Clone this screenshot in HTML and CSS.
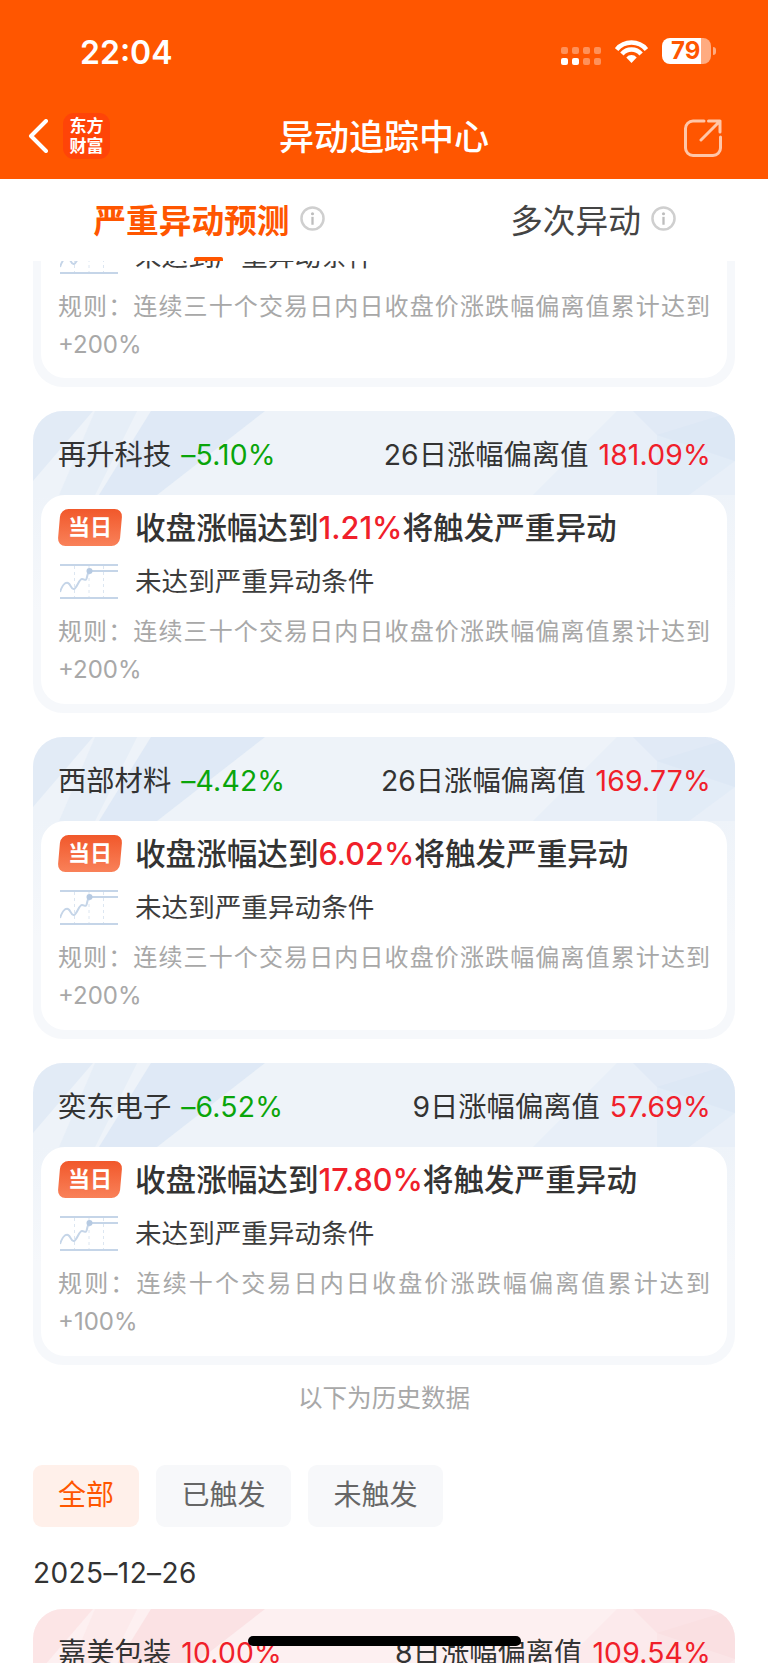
FILE: index.html
```html
<!doctype html>
<html lang="zh">
<head>
  <meta charset="utf-8">
  <title>异动追踪中心</title>
  <link rel="stylesheet" href="styles.css">
</head>
<body>
<svg class="defs" width="0" height="0">
  <symbol id="facets" viewBox="0 0 702 84" preserveAspectRatio="none">
    <polygon points="0,0 60,0 0,70" fill-opacity=".4"/>
    <polygon points="62,0 104,0 62,84 26,84" fill-opacity=".22"/>
    <polygon points="118,0 232,0 124,84 66,84" fill-opacity=".5"/>
    <polygon points="584,0 702,0 702,84 500,84" fill-opacity=".18"/>
    <polygon points="624,24 702,0 702,50 656,84 624,84" fill-opacity=".2"/>
    <polygon points="600,0 702,0 702,50 624,24" fill-opacity=".3"/>
  </symbol>
  <symbol id="info" viewBox="0 0 24 24">
    <circle cx="12" cy="12" r="10.6" fill="none" stroke="#cfcfcf" stroke-width="2.4"/>
    <circle cx="12" cy="7.4" r="1.5" fill="#bdbdbd"/>
    <rect x="10.9" y="10.4" width="2.2" height="7.6" fill="#bdbdbd"/>
  </symbol>
  <symbol id="trend" viewBox="0 0 58 35">
    <g fill="none" stroke="#c5d5e8">
      <path d="M0 1H58M0 34H58" stroke-width="2"/>
      <path d="M14.5 2V33M29 2V33M43.5 2V33" stroke-width="1" stroke-dasharray="3 3" stroke-opacity=".6"/>
      <path d="M0 28C2 22 5 18 8 19C11 20 11 26 14 25C17 24 19 15 22 15C25 15 26 18 27 13C28 9 28 7 30 7H58" stroke-width="2"/>
    </g>
    <circle cx="29.5" cy="7" r="3" fill="#b6cae2"/>
  </symbol>
</svg>

<div class="page">
  <header class="top">
    <div class="status">
      <span class="time">22:04</span>
      <div class="status-icons">
        <div class="cells">
          <i></i><i></i><i></i><i></i>
          <i class="on"></i><i class="on"></i><i></i><i></i>
        </div>
        <svg class="wifi" viewBox="0 0 33 23">
          <g fill="none" stroke="#fff" stroke-width="4.5">
            <path d="M1.6 9.5A19.5 19.5 0 0 1 31.4 9.5"/>
            <path d="M6.9 14A12.5 12.5 0 0 1 26.1 14"/>
          </g>
          <path d="M16.5 23L11.3 17.4A7 7 0 0 1 21.7 17.4Z" fill="#fff"/>
        </svg>
        <div class="battery"><span>79</span></div>
        <i class="nub"></i>
      </div>
    </div>
    <nav class="nav">
      <div class="nav-left">
        <svg class="back" viewBox="0 0 20 34"><path d="M18 2L3 17L18 32" fill="none" stroke="#fff" stroke-width="4" stroke-linecap="round" stroke-linejoin="round"/></svg>
        <div class="logo">东方<br>财富</div>
      </div>
      <h1 class="title">异动追踪中心</h1>
      <div class="nav-right">
        <svg class="share" viewBox="0 0 38 38">
          <g fill="none" stroke="#ffc6a8" stroke-width="3" stroke-linecap="round" stroke-linejoin="round">
            <path d="M20 2H9A7.5 7.5 0 0 0 1.5 9.500V29A7.500 7.500 0 0 0 9 36.500H29A7.500 7.500 0 0 0 36.500 29V18"/>
            <path d="M17 21L36 2M24.500 2H36V13"/>
          </g>
        </svg>
      </div>
    </nav>
  </header>

  <div class="tabs">
    <div class="tab active">
      <div class="tab-inner">严重异动预测<svg class="info"><use href="#info"/></svg><i class="tab-bar"></i></div>
    </div>
    <div class="tab">
      <div class="tab-inner">多次异动<svg class="info"><use href="#info"/></svg></div>
    </div>
  </div>

  <main class="scroller">
    <div class="list">
      <!-- scrolled past the tabs, only its lower part still shows -->
      <section class="card card-tail">
        <div class="card-body">
          <div class="state"><svg class="trend"><use href="#trend"/></svg>未达到严重异动条件</div>
          <p class="rule">规则：连续三十个交易日内日收盘价涨跌幅偏离值累计达到+200%</p>
        </div>
      </section>

      <section class="card">
        <svg class="facets"><use href="#facets"/></svg>
        <div class="card-head">
          <div class="stock">再升科技<span class="down">–5.10%</span></div>
          <div class="stock">26日涨幅偏离值<span class="up">181.09%</span></div>
        </div>
        <div class="card-body">
          <div class="hint"><span class="badge"><b>当日</b></span><span>收盘涨幅达到<em>1.21%</em>将触发严重异动</span></div>
          <div class="state"><svg class="trend"><use href="#trend"/></svg>未达到严重异动条件</div>
          <p class="rule">规则：连续三十个交易日内日收盘价涨跌幅偏离值累计达到+200%</p>
        </div>
      </section>

      <section class="card">
        <svg class="facets"><use href="#facets"/></svg>
        <div class="card-head">
          <div class="stock">西部材料<span class="down">–4.42%</span></div>
          <div class="stock">26日涨幅偏离值<span class="up">169.77%</span></div>
        </div>
        <div class="card-body">
          <div class="hint"><span class="badge"><b>当日</b></span><span>收盘涨幅达到<em>6.02%</em>将触发严重异动</span></div>
          <div class="state"><svg class="trend"><use href="#trend"/></svg>未达到严重异动条件</div>
          <p class="rule">规则：连续三十个交易日内日收盘价涨跌幅偏离值累计达到+200%</p>
        </div>
      </section>

      <section class="card">
        <svg class="facets"><use href="#facets"/></svg>
        <div class="card-head">
          <div class="stock">奕东电子<span class="down">–6.52%</span></div>
          <div class="stock">9日涨幅偏离值<span class="up">57.69%</span></div>
        </div>
        <div class="card-body">
          <div class="hint"><span class="badge"><b>当日</b></span><span>收盘涨幅达到<em>17.80%</em>将触发严重异动</span></div>
          <div class="state"><svg class="trend"><use href="#trend"/></svg>未达到严重异动条件</div>
          <p class="rule">规则：连续十个交易日内日收盘价涨跌幅偏离值累计达到+100%</p>
        </div>
      </section>
    </div>

    <p class="note">以下为历史数据</p>

    <div class="filters">
      <span class="filter active">全部</span>
      <span class="filter">已触发</span>
      <span class="filter">未触发</span>
    </div>

    <div class="date">2025–12–26</div>

    <section class="card card-red">
      <svg class="facets"><use href="#facets"/></svg>
      <div class="card-head">
        <div class="stock">嘉美包装<span class="up">10.00%</span></div>
        <div class="stock">8日涨幅偏离值<span class="up">109.54%</span></div>
      </div>
    </section>
  </main>

  <i class="home-bar"></i>
</div>
</body>
</html>
```

FILE: styles.css
```css
* {
  box-sizing: border-box;
}
body {
  margin: 0;
  background: #fff;
  color: #333;
  font-family: Inter, "Noto Sans CJK SC", sans-serif;
}
.defs {
  position: absolute;
}
.page {
  position: relative;
  display: flex;
  flex-direction: column;
  height: 1663px;
  overflow: hidden;
}

/* header */
.top {
  flex: none;
  height: 179px;
  background: #ff5600;
  color: #fff;
}
.status {
  display: flex;
  justify-content: space-between;
  height: 96px;
  padding: 36px 52px 0 80px;
}
.time {
  font-size: 32px;
  line-height: 34px;
  font-weight: 600;
}
.status-icons {
  display: flex;
  align-items: flex-start;
  margin-top: -2px;
}
.cells {
  display: grid;
  grid-template-columns: repeat(4, 7px);
  gap: 4px;
  margin: 13px 14px 0 0;
}
.cells i {
  height: 7px;
  border-radius: 2px;
  background: rgba(255, 255, 255, .35);
}
.cells i.on {
  background: #fff;
}
.wifi {
  width: 33px;
  height: 23px;
  margin: 6px 14px 0 0;
}
.battery {
  width: 49px;
  height: 26px;
  margin-top: 4px;
  border-radius: 8px;
  background: linear-gradient(90deg, #fff 79%, rgba(255, 255, 255, .5) 79%);
  color: #ff5600;
  font-size: 24px;
  line-height: 26px;
  font-weight: 700;
  padding-left: 9px;
}
.nub {
  width: 3px;
  height: 8px;
  margin: 13px 0 0 2px;
  border-radius: 0 3px 3px 0;
  background: rgba(255, 255, 255, .5);
}
.nav {
  display: grid;
  grid-template-columns: 1fr auto 1fr;
  align-items: center;
  height: 80px;
}
.nav-left {
  display: flex;
  align-items: center;
  padding-left: 28px;
}
.back {
  width: 20px;
  height: 34px;
  margin-right: 15px;
}
.logo {
  width: 47px;
  height: 46px;
  padding-top: 3px;
  border-radius: 11px;
  background: #ff4408;
  font-size: 17px;
  line-height: 20px;
  font-weight: 700;
  text-align: center;
}
.title {
  margin: 2px 0 0;
  font-size: 35px;
  line-height: 44px;
  font-weight: 500;
}
.nav-right {
  display: flex;
  justify-content: flex-end;
  padding: 4px 46px 0 0;
}
.share {
  width: 38px;
  height: 38px;
}

/* tabs */
.tabs {
  flex: none;
  position: relative;
  z-index: 1;
  display: grid;
  grid-template-columns: 1fr 1fr;
  height: 82px;
  background: #fff;
}
.tab {
  display: flex;
  justify-content: center;
  padding-left: 34px;
  font-size: 32.700px;
  color: #444;
}
.tab.active {
  color: #ff5600;
  font-weight: 700;
}
.tab-inner {
  position: relative;
  display: flex;
  align-items: center;
  padding-bottom: 4px;
}
.info {
  width: 25px;
  height: 25px;
  margin-left: 10px;
}
.tab-bar {
  position: absolute;
  left: 50%;
  bottom: 0;
  width: 29px;
  height: 4px;
  margin-left: -15px;
  border-radius: 2px 2px 0 0;
  background: #ff5600;
}

/* list */
.scroller {
  flex: 1;
  min-height: 0;
  overflow: hidden;
  padding: 0 33px;
}
.list {
  display: flex;
  flex-direction: column;
  gap: 24px;
  margin-top: -22px;
}
.card {
  position: relative;
  overflow: hidden;
  flex: none;
  height: 302px;
  border-radius: 30px;
  background: linear-gradient(#eef3f9 84px, #f6f8fb 200px);
  color: #cfdff3;
}
.card-tail {
  height: 148px;
  border-radius: 0 0 30px 30px;
  background: #f6f8fb;
}
.card-tail .card-body {
  height: 139px;
  margin-top: 0;
  padding-top: 0;
  border-radius: 0 0 24px 24px;
}
.card-tail .state {
  margin-top: 0;
}
.card-red {
  margin-top: 18px;
  background: #fdf0f1;
  color: #fad4d8;
}
.facets {
  position: absolute;
  top: 0;
  left: 0;
  width: 702px;
  height: 84px;
  fill: currentColor;
}
.card-head {
  position: relative;
  display: flex;
  justify-content: space-between;
  align-items: center;
  height: 82px;
  padding: 0 24px 0 25px;
  font-size: 28.300px;
  color: #333;
}
.stock span {
  margin-left: 10px;
  letter-spacing: .2px;
}
.up {
  color: #f0202a;
}
.down {
  color: #0aa50a;
}
.card-body {
  margin: 2px 8px 0;
  height: 209px;
  padding: 14px 17px 0;
  border-radius: 24px;
  background: #fff;
  color: #333;
}
.hint {
  display: flex;
  align-items: center;
  gap: 14px;
  height: 37px;
  font-size: 30.600px;
  font-weight: 500;
}
.hint span:last-child {
  margin-top: -3px;
}
.hint em {
  font-style: normal;
  color: #f0202a;
}
.badge {
  flex: none;
  width: 62px;
  height: 37px;
  margin-left: 1px;
  border-radius: 8px;
  background: linear-gradient(#f1582b, #f98159);
  transform: skewX(-5deg);
  text-align: center;
}
.badge b {
  display: block;
  transform: skewX(5deg);
  color: #fff;
  font-size: 22px;
  line-height: 36px;
  font-weight: 700;
}
.state {
  display: flex;
  align-items: center;
  height: 35px;
  margin-top: 18px;
  padding-left: 2px;
  font-size: 26.600px;
  line-height: 35px;
  color: #3d3d3d;
}
.trend {
  width: 58px;
  height: 35px;
  margin-right: 17px;
}
.rule {
  margin: 14px 0 0;
  font-size: 24px;
  line-height: 38px;
  color: #a8a8a8;
  text-align: justify;
}

/* history */
.note {
  margin: 15px 0 0;
  font-size: 24.600px;
  line-height: 36px;
  color: #a8a8a8;
  text-align: center;
}
.filters {
  display: flex;
  gap: 17px;
  margin-top: 49px;
}
.filter {
  height: 62px;
  padding: 0 25.500px;
  border-radius: 9px;
  background: #f7f8fa;
  font-size: 28px;
  line-height: 60px;
  color: #666;
}
.filter.active {
  padding: 0 25px;
  background: #fff0ea;
  color: #ff5600;
}
.date {
  margin-top: 28px;
  font-size: 28px;
  line-height: 36px;
  letter-spacing: .4px;
}
.home-bar {
  position: absolute;
  left: 248px;
  top: 1636px;
  width: 273px;
  height: 10px;
  border-radius: 5px;
  background: #000;
}
```
